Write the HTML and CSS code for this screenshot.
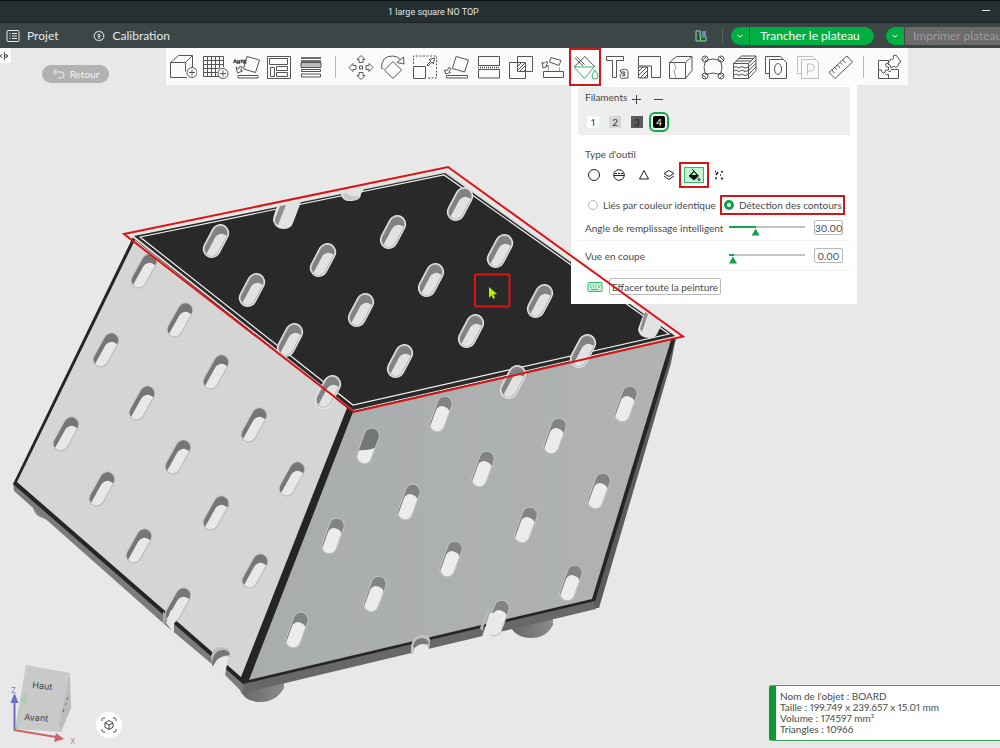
FILE: index.html
```html
<!DOCTYPE html>
<html lang="fr">
<head>
<meta charset="utf-8">
<meta name="viewport" content="width=device-width, initial-scale=1">
<title>1 large square NO TOP</title>
<link rel="stylesheet" href="styles.css">
</head>
<body>
<header>
  <div class="titlebar">
    <h1 class="title">1 large square NO TOP</h1>
    <button class="minimize" type="button" aria-label="Réduire"></button>
  </div>
  <nav class="menubar">
    <a class="menu-item" href="#projet">
      <svg class="menu-icon" viewBox="0 0 14 14"><rect x="1" y="1.500" width="12" height="11" rx="1"/><path d="M3.500 4.500h1M6 4.500h5M3.500 7h1M6 7h5M3.500 9.500h1M6 9.500h5"/></svg>
      Projet</a>
    <a class="menu-item menu-calibration" href="#calibration">
      <svg class="menu-icon" viewBox="0 0 14 14"><path d="M7 2l1.300 1 1.700-.2.500 1.600 1.500 1-.5 1.600.5 1.600-1.500 1-.5 1.600-1.700-.2L7 12l-1.300-1-1.700.2-.5-1.600-1.500-1L2.500 7 2 5.400l1.500-1L4 2.800l1.700.2z"/><circle cx="7" cy="6.500" r="1.200"/><path d="M7 7v3"/></svg>
      Calibration</a>
    <div class="menu-right">
      <svg class="plates-icon" viewBox="0 0 12 12"><path d="M1 1h4.500v10H1zM5.500 6H11v5H5.500z" fill="none" stroke="#8fe0a8"/><path d="M4 1h1.500v5H11v2H4z" fill="#18b04c"/><rect x="7" y="1" width="4" height="4" fill="#8878c8"/></svg>
      <span class="menu-sep"></span>
      <div class="split">
        <button class="caret" type="button" aria-label="Options de tranchage"><svg viewBox="0 0 8 8"><path d="M1.500 3L4 5l2.500-2"/></svg></button>
        <button class="slice" type="button">Trancher le plateau</button>
      </div>
      <div class="split">
        <button class="caret" type="button" aria-label="Options d'impression"><svg viewBox="0 0 8 8"><path d="M1.500 3L4 5l2.500-2"/></svg></button>
        <button class="print" type="button" disabled>Imprimer plateau</button>
      </div>
    </div>
  </nav>
</header>

<main class="viewport">
  <svg class="scene" viewBox="0 48 1000 700" preserveAspectRatio="xMinYMin slice" role="img" aria-label="BOARD">
    <defs>
      <clipPath id="clip-top"><rect x="-7" y="-16" width="14" height="32" rx="7" transform="rotate(28)"/></clipPath>
      <clipPath id="clip-left"><rect x="-7" y="-18" width="14" height="36" rx="7" transform="rotate(29)"/></clipPath>
      <clipPath id="clip-right"><rect x="-7" y="-18" width="14" height="36" rx="7" transform="rotate(20)"/></clipPath>
      <g id="hole-top">
        <rect x="-9" y="-18" width="18" height="36" rx="9" transform="rotate(28)" fill="#e6e6e6"/>
        <rect x="-8" y="-17" width="16" height="34" rx="8" transform="rotate(28)" fill="#c0c0c0"/>
        <g clip-path="url(#clip-top)">
          <rect x="-20" y="-20" width="40" height="40" fill="#828282"/>
          <rect x="-7" y="-14" width="16" height="40" rx="7" transform="translate(2 6) rotate(28)" fill="#e2e2e2"/>
        </g>
      </g>
      <g id="hole-left">
        <rect x="-8" y="-19" width="16" height="38" rx="8" transform="rotate(29)" fill="#c2c2c2"/>
        <g clip-path="url(#clip-left)">
          <rect x="-20" y="-20" width="40" height="40" fill="#767676"/>
          <rect x="-7" y="-14" width="16" height="40" rx="7" transform="translate(2 5) rotate(29)" fill="#e8e8e8"/>
        </g>
      </g>
      <g id="hole-right">
        <rect x="-8" y="-19" width="16" height="38" rx="8" transform="rotate(20)" fill="#c2c4c4"/>
        <g clip-path="url(#clip-right)">
          <rect x="-20" y="-20" width="40" height="40" fill="#828484"/>
          <rect x="-7" y="-14" width="14" height="40" rx="6" transform="translate(-1 6) rotate(20)" fill="#ececec"/>
        </g>
      </g>
      <linearGradient id="right-face" x1="0" y1="0" x2="1" y2="0"><stop offset="0" stop-color="#a9acad"/><stop offset="1" stop-color="#b1b3b3"/></linearGradient>
      <linearGradient id="foot" x1="0" y1="0" x2="1" y2="0"><stop offset="0" stop-color="#656565"/><stop offset="1" stop-color="#8b8b8b"/></linearGradient>
    </defs>

    <!-- feet -->
    <path d="M33 505q0 11 12 14l8 2 8-6z" fill="#858585"/>
    <path d="M239 680v8q5 14 21 14t24-14v-10z" fill="url(#foot)"/>
    <path d="M510 618v8q6 12 21 12t22-13v-12z" fill="url(#foot)"/>

    <!-- side walls -->
    <path d="M13 483L243 681v12L225 675 163 623 14 491z" fill="#7c7c7c"/>
    <path d="M243 681L596 598v11L243 693z" fill="#686868"/>
    <path d="M676 337l-5 26-72 245h-4l-2-8z" fill="#5c5c5c"/>

    <!-- left face -->
    <path d="M133 237L352 410 243 684 13 484z" fill="#252525"/>
    <path d="M135 240L347 408 241 677 17 482z" fill="#d5d5d5"/>
    <!-- right face -->
    <path d="M348 408L676 338 595 601 243 684 242 678z" fill="#252525"/>
    <path d="M353 412L671 340 592 599 249 680z" fill="url(#right-face)"/>

    <!-- top face -->
    <path d="M132 237L446 171 677 337 353 411z" fill="#ddd"/>
    <path d="M134 236L445 173 675 336 353 410z" fill="#292929"/>
    <path d="M140 237L444 175 669 334 353 405z" fill="none" stroke="#f2f2f2" stroke-width="1.200"/>

    <g>
      <use href="#hole-left" x="144" y="271"/><use href="#hole-left" x="180" y="320"/><use href="#hole-left" x="106" y="350"/>
      <use href="#hole-left" x="216" y="372"/><use href="#hole-left" x="142" y="403"/><use href="#hole-left" x="66" y="434"/>
      <use href="#hole-left" x="254" y="425"/><use href="#hole-left" x="178" y="457"/><use href="#hole-left" x="102" y="489"/>
      <use href="#hole-left" x="292" y="479"/><use href="#hole-left" x="216" y="513"/><use href="#hole-left" x="139" y="546"/>
      <use href="#hole-left" x="255" y="571"/><use href="#hole-left" x="178" y="605"/>
    </g>
    <g>
      <use href="#hole-right" x="441" y="414"/><use href="#hole-right" x="626" y="404"/><use href="#hole-right" x="555" y="436"/>
      <use href="#hole-right" x="483" y="469"/><use href="#hole-right" x="409" y="502"/><use href="#hole-right" x="599" y="491"/>
      <use href="#hole-right" x="526" y="525"/><use href="#hole-right" x="451" y="559"/><use href="#hole-right" x="571" y="583"/>
      <use href="#hole-right" x="333" y="536"/><use href="#hole-right" x="375" y="594"/><use href="#hole-right" x="297" y="630"/>
      <use href="#hole-right" x="368" y="446"/><use href="#hole-right" x="498" y="618"/>
    </g>
    <g transform="translate(368 446)">
      <g clip-path="url(#clip-right)">
        <path d="M-20-20h40v40h-40z" fill="#757777"/>
        <path d="M-16 8q6-4 12-4 8 0 14-4v22h-26z" fill="#ececec"/>
      </g>
    </g>
    <g>
      <use href="#hole-top" x="216" y="241"/><use href="#hole-top" x="252" y="290"/><use href="#hole-top" x="323" y="260"/>
      <use href="#hole-top" x="393" y="232"/><use href="#hole-top" x="361" y="310"/><use href="#hole-top" x="431" y="280"/>
      <use href="#hole-top" x="460" y="204"/><use href="#hole-top" x="500" y="251"/><use href="#hole-top" x="540" y="301"/>
      <use href="#hole-top" x="471" y="331"/><use href="#hole-top" x="400" y="361"/><use href="#hole-top" x="290" y="340"/>
      <use href="#hole-top" x="328" y="392"/><use href="#hole-top" x="583" y="351"/><use href="#hole-top" x="513" y="382"/>
    </g>

    <!-- notches cut through the edges -->
    <path d="M278 205q-5 10-5 16 3 8 10 8 8 0 10-6l8-21z" fill="#e2e2e2"/>
    <path d="M280 206l6-1-8 20q-4-2-3-6z" fill="#8e8e8e"/>
    <path d="M341 194q1 8 11 7 9-1 9-7l3-5-2-2-23 4z" fill="#e2e2e2"/>
    <path d="M343 194l4-1q2 4 12 3-1 4-8 4-7 0-8-6z" fill="#c6c6c6"/>
    <path d="M645 311q-6 14-7 19 2 8 11 8 6 0 8-4l6-12z" fill="#e2e2e2"/>
    <path d="M645 312l-5 17 2 3 6-18z" fill="#8e8e8e"/>
    <path d="M166 623l5-13 8 2-5 12v9z" fill="#e8e8e8"/>
    <path d="M163 611l3 4-1 9-2-1z" fill="#a8a8a8"/>
    <path d="M211 656q2-9 10-9 9 0 9 7l-4 15-2 7-12-10z" fill="#bdbdbd"/>
    <path d="M212 662q2-12 11-12 6 0 7 5-8 0-12 7l-6 4z" fill="#777"/>
    <path d="M213 667q4-11 13-11l3 1-3 10-1 10z" fill="#e8e8e8"/>
    <path d="M482 637l8-24 13 1-2 9v9z" fill="#e9e9e9"/>
    <path d="M480 628l8-20 2 1-8 22z" fill="#b7b9b9"/>
    <path d="M411 646q2-11 11-11 9 0 8 7l-1 8-18 4z" fill="#c2c4c4"/>
    <path d="M413 646q2-8 9-8 6 0 7 6-8-1-13 6z" fill="#7b7b7b"/>
    <path d="M413 654q1-9 9-10 6 0 7 6v2z" fill="#e9e9e9"/>
  </svg>

  <div class="top-row">
    <button class="collapse" type="button" aria-label="Replier"><svg viewBox="0 0 12 14"><path d="M2 5L0 7l2 2M4.500 3v8M6 5l2 2-2 2z"/></svg></button>
    <button class="back" type="button"><svg viewBox="0 0 14 12"><path d="M4.500 1L1.500 4l3 3M1.500 4H9q3 0 3 3t-3 3H6"/></svg>Retour</button>
    <div class="toolbar" role="toolbar" aria-label="Outils">
      <button type="button" aria-label="Ajouter"><svg viewBox="0 0 28 28"><path d="M18 24.500H1.500v-15h15v9M1.500 9.500l8-7h14l-7 7M23.500 2.500V14"/><circle cx="23" cy="19.500" r="5"/><path d="M20 19.500h6M23 16.500v6"/></svg></button>
      <button type="button" aria-label="Ajouter un plateau"><svg viewBox="0 0 28 28"><path d="M18 23.500H2.500v-20h20V14M6.500 3.500v20M10.500 3.500v20M14.500 3.500v20M18.500 3.500V15M2.500 7.500h20M2.500 11.500h20M2.500 15.500h16M2.500 19.500h14"/><circle cx="22" cy="20.500" r="5"/><path d="M19 20.500h6M22 17.500v6"/></svg></button>
      <button type="button" aria-label="Orientation automatique"><svg viewBox="0 0 28 28"><path d="M14 3.500l12.500 3.500-4 12.500L10.500 16zM5 22.500h20v2.500H5zM3 14l1.500 6L9.500 18l-2-1 2-3-3-.5-1 2.500z"/><path class="bold" d="M.5 10L2 7l1.500 3M4.500 7v3h2V7M7.500 7.500H10M8.800 7.500V10M11 7.500h1.500V10H11z"/></svg></button>
      <button type="button" aria-label="Arranger"><svg viewBox="0 0 28 28"><path d="M2.500 3.500h23v22h-23zM4.500 5.500h18v6h-18zM5.500 14.500h4v9h-4zM11.500 13.500h11v4h-11zM11.500 19.500h11v4h-11z"/></svg></button>
      <button type="button" aria-label="Hauteur de couche"><svg viewBox="0 0 28 28"><path d="M4 9.500h20v5H4z" fill="#bbb"/><path class="bold" d="M4 5h20M4 8h20"/><path d="M4.500 16.500h19v2h-19zM4.500 21h19v3h-19z"/></svg></button>
      <span class="sep"></span>
      <button type="button" aria-label="Déplacer"><svg viewBox="0 0 28 28"><path d="M14 2.500l4 4h-2v3h-4v-3h-2zM14 26.500l4-4h-2v-3h-4v3h-2zM2 14.500l4-4v2h3v4H6v2zM26 14.500l-4-4v2h-3v4h3v2zM12.500 13h3v3h-3z"/></svg></button>
      <button type="button" aria-label="Pivoter"><svg viewBox="0 0 28 28"><path d="M14 8.500l8.500 8.500L14 25.500 5.500 17zM2.500 15q0-12 11-12 5 0 8.500 4M24.500 4l.5 7-7-1.500zM2.500 15l2 1"/></svg></button>
      <button type="button" aria-label="Mettre à l'échelle"><svg viewBox="0 0 28 28"><path d="M2.500 13.500h12v12h-12zM16 12l4-4-2-1.500 5.500-1.500-1 6-1.500-2-4 4z"/><path d="M2.500 11v-8h23v22H16" stroke-dasharray="2 1.500"/></svg></button>
      <button type="button" aria-label="Poser sur face"><svg viewBox="0 0 28 28"><path d="M13 3.500l12.500 3.500-4 12L9.500 15.500zM3.500 22.500h21v2.500h-21zM1.500 17l1 4 5-1.500-1.500-1 2-3-2-1-2 3z"/></svg></button>
      <button type="button" aria-label="Couper"><svg viewBox="0 0 28 28"><path d="M3.500 13V3.500h21V13M3.500 12.500h21M3.500 16.500h21V25h-21v-8.500"/><path class="bold" d="M3 14.500h22" stroke-dasharray="1 1"/></svg></button>
      <button type="button" aria-label="Booléen"><svg viewBox="0 0 28 28"><path d="M2.500 9.500h16v16h-16zM10.500 3.500h15v15h-15z"/><path d="M11 13l3.500-3.500M11 17l7-7M13 18l5-5M17 18l1.500-1.500"/></svg></button>
      <button type="button" aria-label="Supports"><svg viewBox="0 0 28 28"><path d="M4.500 18.500h20v6h-20zM12 4.500l10 3-2 5-9.500-3.500zM3 9l1 6 5-2-2-1 2-2.500-2-1-2 2z"/><path d="M9.500 17.500v-5M20.500 17.500V14" stroke-dasharray="1 1"/></svg></button>
      <button class="marked" type="button" aria-label="Peindre" aria-pressed="true"><svg viewBox="0 0 28 28"><path d="M3 14L14 3.500l10 10.500"/><path d="M4 5l8 8M5.500 3.500l8 8"/><path class="green" d="M3 14h20L13.500 25.500zM24 17q-3 4-3 6 0 3 3 3t3-3q0-2-3-6z"/></svg></button>
      <button type="button" aria-label="Texte"><svg viewBox="0 0 28 28"><path d="M3.500 3.500h17v4h-7v17h-4v-17h-6z"/><path d="M17 17.500q7-3 8 1v6.500h-2q-6 1.500-6-2 0-3 5-3v-.8q-2-1-4 .3zM22 21.500q-3 0-2.500 1.300 1 1 2.500-.5z"/></svg></button>
      <button type="button" aria-label="Mesh"><svg viewBox="0 0 28 28"><path d="M3.500 13V3.500h22v21h-9V13h-13M3.500 14v11h9V14z"/><path d="M4 18l4-4M4 22l8-8M5 25l7-7M9 25l3-3"/></svg></button>
      <button type="button" aria-label="Couture"><svg viewBox="0 0 28 28"><path d="M2.500 9.500h16v16h-16zM2.500 9.500l7-6h15.500l-6.500 6M25 3.500v14l-6.500 8"/><path d="M7 9.500l2 6-2 2 2 8" stroke="#999"/></svg></button>
      <button type="button" aria-label="Oreilles de bordure"><svg viewBox="0 0 28 28"><path d="M6.500 7.500q8-3 15 0 3 7 0 14-7-3-15 0-3-7 0-14z"/><circle cx="6" cy="6" r="3"/><circle cx="22" cy="6" r="3"/><circle cx="6" cy="23" r="3"/><circle cx="22" cy="23" r="3"/><path d="M4 7l3-3M21 4l3 3M4 22l3 3M21 25l3-3"/></svg></button>
      <button type="button" aria-label="Couches variables"><svg viewBox="0 0 28 28"><path d="M2.500 10.500h15v15h-15zM2.500 10.500l8-7.500h14.500l-7.500 7.500M25 3v14.500l-7.500 8M5 8h15M7.500 5.500h15M17.500 14L25 7M17.500 17.500L25 10.500M17.500 21.500L25 14"/><path d="M3 14.500l2-1 3 1.500 3-1.500 3 1.500 3-1M3 18l2-1 3 1.500 3-1.500 3 1.500 3-1M3 22l2-1 3 1.500 3-1.500 3 1.500 3-1"/></svg></button>
      <button type="button" aria-label="Objet"><svg viewBox="0 0 28 28"><path d="M6 20.500H2.500v-17h15l3 3M6.500 6.500h14l3 3v16h-17z"/><ellipse cx="15" cy="16" rx="3.500" ry="5.500"/></svg></button>
      <button class="faded" type="button" aria-label="Pièce" disabled><svg viewBox="0 0 28 28"><path d="M6 20.500H2.500v-17h15l3 3M6.500 6.500h14l3 3v16h-17zM12.500 22V11h3q4 0 4 3.500t-4 3.500h-3"/></svg></button>
      <button type="button" aria-label="Mesurer"><svg viewBox="0 0 28 28"><path d="M2 19.500L20 3l5.500 6L8 25.500zM5 17l2.500 3M8 14.500l1.500 2M10.500 12l2.500 3M13.500 9.500l1.500 2M16 7l2.500 3"/></svg></button>
      <span class="sep"></span>
      <button type="button" aria-label="Assembler"><svg viewBox="0 0 28 28"><path d="M3.500 7.500h10v3q-3-1-3 1.500t3 2v3h-3q0 3-2 3t-2-3h-3zM3.500 17v8.500h20v-9h-7q-1 3-3 2M13.500 25.500v-4q-3 1-3-1M14 9l2-3q2 1 2.500-.5T18 3l3-1 5 7-3 2q1 2-1 3t-3-1l-3 2-1-3q-3 0-2-2.500"/></svg></button>
    </div>
  </div>

  <section class="panel" aria-label="Peinture couleur">
    <div class="filaments">
      <div class="fil-head">Filaments
        <button class="step plus" type="button" aria-label="Ajouter un filament"></button>
        <button class="step" type="button" aria-label="Retirer un filament"></button>
      </div>
      <div class="swatches">
        <button class="swatch s1" type="button">1</button>
        <button class="swatch s2" type="button">2</button>
        <button class="swatch s3" type="button">3</button>
        <button class="swatch s4" type="button" aria-pressed="true">4</button>
      </div>
    </div>
    <h2 class="caption">Type d'outil</h2>
    <div class="tools">
      <button type="button" aria-label="Cercle"><svg viewBox="0 0 14 14"><circle cx="7" cy="7" r="5.500"/></svg></button>
      <button type="button" aria-label="Sphère"><svg viewBox="0 0 14 14"><circle cx="7" cy="7" r="5.300"/><path d="M2 7.500h10"/><path d="M3 5.500h8" stroke-dasharray="2 1"/></svg></button>
      <button type="button" aria-label="Triangle"><svg viewBox="0 0 14 14"><path d="M7 2.500l4.500 8.500h-9z"/></svg></button>
      <button type="button" aria-label="Plage de hauteur"><svg viewBox="0 0 14 14"><path d="M7 2.500l5 3-5 3-5-3zM2 8l5 3.500L12 8"/></svg></button>
      <button class="fill-tool" type="button" aria-label="Remplissage" aria-pressed="true"><svg viewBox="0 0 14 14"><path d="M2 8l5-5 4.500 5L7 12z" fill="#111"/><path d="M4.500 7L7 4l2.500 3z" fill="#c5f5d5" stroke="none"/><path d="M5 1l2 2"/><circle cx="12" cy="11.500" r="1"/></svg></button>
      <button type="button" aria-label="Combler les trous"><svg viewBox="0 0 14 14"><path class="bold" d="M3 3.500h1M6 4l-2 3M9 4l2-.5M8 7h1M3 10.500l2-.5M9 10l2 1"/></svg></button>
    </div>
    <div class="modes">
      <label><input type="radio" name="mode">Liés par couleur identique</label>
      <label class="marked"><input type="radio" name="mode" checked>Détection des contours</label>
    </div>
    <div class="row row-angle">
      <label for="angle">Angle de remplissage intelligent</label>
      <input class="slider angle" id="angle" type="range" min="0" max="90" value="30">
      <input class="number" type="text" value="30.00" aria-label="Angle">
    </div>
    <div class="row">
      <label for="section">Vue en coupe</label>
      <input class="slider section" id="section" type="range" min="0" max="1" value="0">
      <input class="number" type="text" value="0.00" aria-label="Coupe">
    </div>
    <div class="actions">
      <svg class="keyboard" viewBox="0 0 16 12"><rect x="1" y="1.500" width="14" height="9" rx="1" fill="#c9f2d8"/><path d="M3 4h1M5.500 4h1M8 4h1M10.500 4h1M13 4h.5M3 6h1.500M6 6h1M8.500 6h1M11 6h2M4 8.500h7"/></svg>
      <button class="erase" type="button">Effacer toute la peinture</button>
    </div>
  </section>

  <div class="bottom-row">
    <svg class="gizmo" viewBox="0 660 90 88" role="img" aria-label="Orientation">
      <path d="M26 665l44 8-9 59-46-3z" fill="#c9c9c9"/>
      <path d="M70 674l1 34-10 24-2-8z" fill="#bcbcbc"/>
      <path d="M68 697l-1 3M66 703l-1 2M64 709l-1 3" stroke="#666"/>
      <path d="M16 729l8-30" stroke="#a9cfa9"/><path d="M20 701l6-9 1 11z" fill="#a9cfa9"/>
      <path d="M14.500 730v-30" stroke="#6a6fc4" stroke-width="2"/><path d="M10.500 703l4-10 4 10z" fill="#6a6fc4"/>
      <path d="M14 730l42 7" stroke="#cc6666" stroke-width="2"/><path d="M56 733l8 6-10 3z" fill="#cc6666"/>
      <text x="32" y="688" transform="rotate(6 32 688)">Haut</text>
      <text x="24" y="720" transform="rotate(4 24 720)">Avant</text>
      <text class="axis" x="11" y="693">Z</text>
      <text class="axis axis-x" x="70" y="744">X</text>
    </svg>
    <button class="fit" type="button" aria-label="Ajuster la vue"><svg viewBox="0 0 18 18"><path d="M2 5V3.500Q2 2 3.500 2H5M13 2h1.500Q16 2 16 3.500V5M16 13v1.500q0 1.500-1.500 1.500H13M5 16H3.500Q2 16 2 14.500V13M9 4.500l4 2.300v4.400l-4 2.300-4-2.300V6.800zM5 6.800l4 2.200 4-2.200M9 9v4.500"/></svg></button>
    <div class="info">
      <p>Nom de l'objet : BOARD</p>
      <p>Taille : 199.749 x 239.657 x 15.01 mm</p>
      <p>Volume : 174597 mm³</p>
      <p>Triangles : 10966</p>
    </div>
  </div>

  <svg class="markup" viewBox="0 48 1000 700" preserveAspectRatio="xMinYMin slice" aria-hidden="true">
    <path d="M124 234L448 167 683 336.500 354 412z"/>
    <rect x="475" y="274.500" width="34.500" height="32" rx="1"/>
    <path class="pointer" d="M489 287l8 7-3.500.5 1.500 3.500-2 .8-1.500-3.500L489 298z"/>
  </svg>
</main>
</body>
</html>
```
FILE: styles.css
```css
* { box-sizing: border-box; margin: 0; }
html, body { height: 100%; }
body {
  display: flex;
  flex-direction: column;
  overflow: hidden;
  background: #e8e8e8;
  color: #4a4a4a;
  font: 10px/12px Lato, "Noto Sans", sans-serif;
  font-variant-numeric: proportional-nums;
}
button, input {
  font: inherit;
  color: inherit;
  padding: 0;
  border: 0;
  background: none;
}
svg { display: block; fill: none; }

.titlebar {
  display: flex;
  align-items: center;
  height: 22px;
  border-top: 1px solid #0a1012;
  background: #262f31;
  color: #e2e5e5;
}
.title {
  flex: 1;
  padding-left: 388px;
  font: 9px/20px Roboto, sans-serif;
}
.minimize { width: 8px; height: 1px; margin: 0 10px 2px 0; background: #e2e5e5; }

.menubar {
  display: flex;
  align-items: center;
  height: 26px;
  padding-left: 6px;
  border-top: 1px solid #1c2425;
  background: #3d4647;
  color: #e6e9e9;
  font-size: 12px;
  line-height: 16px;
}
.menu-item { display: flex; align-items: center; gap: 7px; color: inherit; text-decoration: none; }
.menu-calibration { margin-left: 33px; }
.menu-icon { width: 14px; height: 14px; stroke: #e6e9e9; }
.menu-right { display: flex; align-items: center; margin-left: auto; }
.plates-icon { width: 12px; height: 12px; }
.menu-sep { width: 1px; height: 16px; margin: 0 8px 0 15px; background: #596263; }
.split { display: flex; gap: 1px; margin-right: 12px; }
.split:last-child { margin-right: 0; }
.caret {
  display: grid;
  place-items: center;
  width: 18px;
  height: 18px;
  border-radius: 9px 0 0 9px;
  background: #00ae42;
}
.caret svg { width: 8px; height: 8px; stroke: #fff; }
.slice { width: 124px; height: 18px; padding-right: 4px; border-radius: 0 9px 9px 0; background: #00ae42; color: #fff; }
.print {
  width: 95px;
  height: 18px;
  padding-left: 8px;
  background: #6b6b6b;
  color: #9b9b9b;
  text-align: left;
  white-space: nowrap;
}

.viewport { position: relative; flex: 1; display: flex; flex-direction: column; min-height: 0; }
.scene, .markup { position: absolute; inset: 0; width: 100%; height: 100%; }
.markup { pointer-events: none; stroke: #dc1414; stroke-width: 2; }
.pointer { fill: #b4f000; stroke: none; }
.top-row, .panel, .bottom-row { position: relative; }
.top-row { z-index: 1; }

.top-row { display: flex; align-items: flex-start; }
.collapse { width: 11px; height: 15px; background: #fafafa; }
.collapse svg { width: 12px; height: 14px; stroke: #555; }
.back {
  display: flex;
  align-items: center;
  justify-content: center;
  gap: 4px;
  width: 67px;
  height: 18px;
  margin: 17px 57px 0 31px;
  border-radius: 9px;
  background: #b2b2b2;
  color: #f2f2f2;
}
.back svg { width: 14px; height: 12px; stroke: #f2f2f2; }
.toolbar { display: flex; align-items: flex-start; height: 37px; padding: 0 3px 0 1px; background: #fbfbfb; }
.toolbar button { display: grid; justify-items: center; align-items: start; width: 32px; height: 38px; padding-top: 5px; }
.toolbar svg { width: 28px; height: 28px; stroke: #555; stroke-width: 1; }
.toolbar .bold { stroke: #444; stroke-width: 1.4; }
.toolbar .green { stroke: #35b56a; }
.toolbar .faded { opacity: 0.35; }
.toolbar .marked { outline: 2px solid #d01818; outline-offset: -2px; }
.sep { width: 1px; height: 22px; margin: 8px 9px 0 8px; background: #b5b5b5; }
.sep:nth-last-child(2) { margin: 8px 9px 0 6px; }

.panel { width: 286px; margin-left: 571px; padding: 2px 7px 9px; background: #fff; }
.filaments { padding: 4px 7px; border-radius: 3px 0 0 3px; background: #eee; }
.fil-head { display: flex; align-items: center; height: 12px; }
.step {
  width: 9px;
  height: 9px;
  margin: 4px 0 0 13px;
  background: linear-gradient(#444, #444) center / 9px 1px no-repeat;
}
.step.plus {
  margin-left: 5px;
  background: linear-gradient(#444, #444) center / 9px 1px no-repeat, linear-gradient(#444, #444) center / 1px 9px no-repeat;
}
.swatches { display: flex; gap: 10px; padding: 13px 2px 3px; }
.swatch { width: 12px; height: 12px; color: #333; line-height: 12px; }
.s1 { background: #fff; }
.s2 { background: #d6d6d6; }
.s3 { background: #5b5b5b; color: #222; }
.s4 { background: #000; color: #fff; outline: 2px solid #14a84b; outline-offset: 2px; border-radius: 2px; }
.caption { margin: 13px 7px 7px; font: inherit; }
.tools { display: flex; gap: 5px; padding: 0 6px; }
.tools button { display: grid; place-items: center; width: 20px; height: 16px; }
.tools svg { width: 14px; height: 14px; stroke: #222; }
.tools .bold { stroke-width: 1.6; }
.tools .fill-tool { border: 1px solid #3bb56c; background: #c5f5d5; outline: 2px solid #d01818; outline-offset: 3px; }
.modes { display: flex; height: 20px; margin-top: 12px; padding: 0 5px 0 10px; justify-content: space-between; }
.modes label { display: flex; align-items: center; gap: 5px; }
.modes .marked { width: 125px; padding-left: 4px; outline: 2px solid #d01818; outline-offset: -2px; }
.modes input { appearance: none; width: 10px; height: 10px; border: 1px solid #b5b5b5; border-radius: 50%; }
.modes input:checked { border: 3px solid #0ea348; }
.row { display: flex; align-items: center; height: 30px; padding: 0 7px; border-bottom: 1px solid #f0f0f0; }
.row-angle { height: 26px; }
.row label { flex: 1; }
.slider { appearance: none; width: 76px; height: 16px; margin-right: 9px; }
.slider::-webkit-slider-runnable-track { height: 16px; background: linear-gradient(#c2c2c2, #c2c2c2) 0 6px / 100% 2px no-repeat; }
.angle::-webkit-slider-runnable-track { background: linear-gradient(90deg, #12a84c 35%, #c2c2c2 35%) 0 6px / 100% 2px no-repeat; }
.section::-webkit-slider-runnable-track { background: linear-gradient(90deg, #12a84c 6%, #c2c2c2 6%) 0 6px / 100% 2px no-repeat; }
.slider::-webkit-slider-thumb { appearance: none; width: 8px; height: 7px; margin-top: 9px; background: #0ea348; clip-path: polygon(50% 0, 100% 100%, 0 100%); }
.number { width: 29px; height: 15px; border: 1px solid #b8b8b8; border-radius: 2px; text-align: center; }
.actions { display: flex; align-items: center; gap: 6px; height: 17px; margin-top: 7px; padding-left: 9px; }
.keyboard { width: 16px; height: 12px; stroke: #3cb36b; }
.erase { width: 112px; height: 17px; border: 1px solid #bbb; border-radius: 2px; }

.bottom-row { display: flex; align-items: flex-end; margin-top: auto; }
.gizmo { width: 90px; height: 88px; }
.gizmo text { fill: #444; font: 9px Inter, sans-serif; }
.gizmo .axis { fill: #8585b0; font-size: 8px; }
.gizmo .axis-x { fill: #b08a8a; }
.fit { display: grid; place-items: center; width: 26px; height: 26px; margin: 0 auto 10px 6px; border-radius: 50%; background: #fff; }
.fit svg { width: 18px; height: 18px; stroke: #444; }
.info {
  width: 231px;
  margin-bottom: 7px;
  padding: 5px 0 5px 4px;
  border: 1px solid #3da45c;
  border-left: 7px solid #0c9a33;
  border-right: 0;
  border-radius: 3px 0 0 3px;
  background: #fff;
  line-height: 11px;
}
```
